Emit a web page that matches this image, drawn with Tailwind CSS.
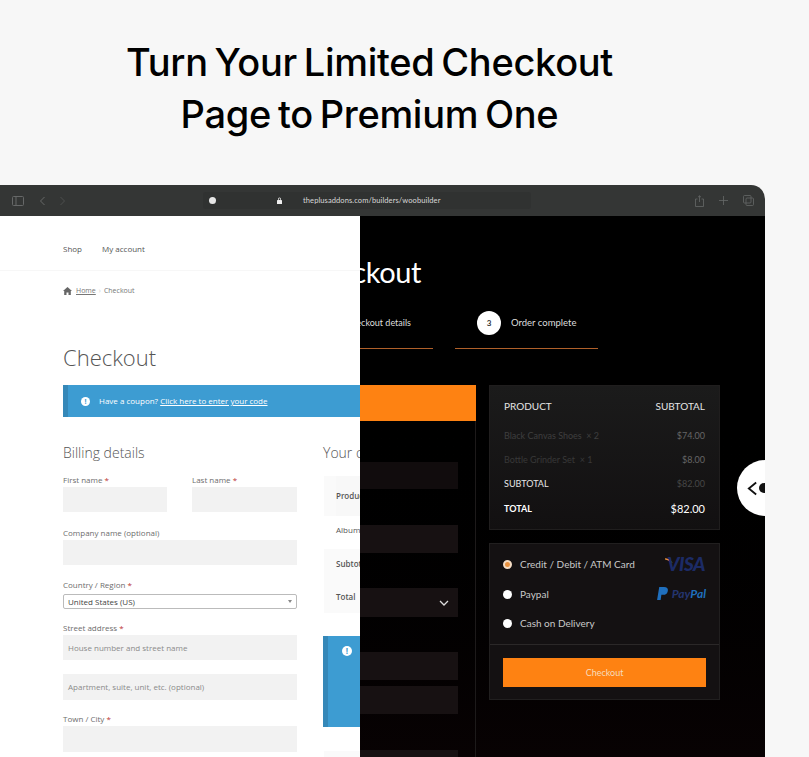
<!DOCTYPE html>
<html lang="en">
<head>
    <meta charset="UTF-8">
    <title>Turn Your Limited Checkout Page to Premium One</title>
    <script src="https://cdn.jsdelivr.net/npm/@tailwindcss/browser@4"></script>
</head>
<body class="bg-[#f7f7f7]">
<div class="h-[757px] w-[809px] overflow-hidden font-['Inter',sans-serif]">
    <!-- heading -->
    <h1 class="w-[739px] h-[185px] pt-[36px] text-center text-[38px] leading-[52px] font-medium tracking-[-0.3px] [word-spacing:-3px] text-black">Turn Your Limited Checkout<br>Page to Premium One</h1>

    <!-- browser frame -->
    <div class="w-[765px] h-[572px] rounded-tr-[14px] overflow-hidden">
        <div class="h-[31px] bg-[#343635] flex items-center text-[#666868]">
            <svg class="ml-[12px] w-[12px] h-[10px]" viewBox="0 0 12 10" fill="none" stroke="currentColor"><rect x="0.5" y="0.5" width="11" height="9" rx="1"/><path d="M4 1v8"/></svg>
            <svg class="ml-[15px] w-[7px] h-[10px]" viewBox="0 0 7 10" fill="none" stroke="currentColor"><path d="M5.5 1 1.5 5l4 4"/></svg>
            <svg class="ml-[13px] w-[7px] h-[10px] opacity-50" viewBox="0 0 7 10" fill="none" stroke="currentColor"><path d="M1.5 1l4 4-4 4"/></svg>
            <div class="ml-[137px] w-[328px] h-[17px] rounded-[3px] bg-[#303231] flex items-center">
                <span class="ml-[6px] w-[7px] h-[7px] rounded-full bg-[#e6e6e6]"></span>
                <svg class="ml-[61px] w-[5px] h-[7px]" viewBox="0 0 5 7" fill="#eee"><rect y="3" width="5" height="4" rx="0.6"/><path d="M1 3V2a1.500 1.500 0 0 1 3 0v1H3.300V2a.8.8 0 0 0-1.600 0v1z"/></svg>
                <span class="ml-[21px] text-[7.5px] text-[#d8d8d8] font-['Lato',sans-serif] tracking-[0.1px]">theplusaddons.com/builders/woobuilder</span>
            </div>
            <svg class="ml-auto w-[9px] h-[12px]" viewBox="0 0 9 12" fill="none" stroke="currentColor" stroke-width="0.8"><path d="M2.500 4H.5v7.500h8V4h-2M4.500 7V.8M3 2.200 4.500.8 6 2.200"/></svg>
            <svg class="ml-[15px] w-[9px] h-[9px]" viewBox="0 0 9 9" fill="none" stroke="currentColor" stroke-width="0.8"><path d="M4.500 0v9M0 4.500h9"/></svg>
            <svg class="ml-[15px] mr-[11px] w-[11px] h-[11px]" viewBox="0 0 11 11" fill="none" stroke="currentColor" stroke-width="0.8"><rect x="0.500" y="0.500" width="7.500" height="7.500" rx="1"/><rect x="3" y="3" width="7.500" height="7.500" rx="1"/></svg>
        </div>

        <div class="relative h-[541px] bg-[#050102] overflow-hidden font-['Lato',sans-serif]">
            <!-- dark version -->
            <div class="h-full bg-gradient-to-b from-black from-30% to-[#080203]">
                <div class="h-[169px]">
                    <div class="w-[421px] pt-[37px] text-right text-[29px] leading-[38px] font-normal tracking-[-0.4px] text-white">Checkout</div>
                    <div class="mt-[20px] flex">
                        <div class="w-[433px] shrink-0 h-[38px] border-b border-[#b0602a] pr-[22px] text-right text-[9px] leading-[23px] text-[#ddd]">Checkout details</div>
                        <div class="ml-[22px] w-[143px] shrink-0 h-[38px] border-b border-[#b0602a] flex items-start">
                            <span class="w-[24px] h-[24px] ml-[22px] rounded-full bg-white text-[8px] font-bold text-[#333] flex items-center justify-center">3</span>
                            <span class="ml-[10px] text-[9.500px] leading-[24px] text-[#ddd] whitespace-nowrap">Order complete</span>
                        </div>
                    </div>
                </div>
                <div class="flex">
                    <div class="w-[476px] shrink-0">
                        <div class="h-[36px] bg-[#fe8212]"></div>
                        <div class="h-[342px] border-r border-[#1d1a1a] pt-[41px] w-[476px] pr-[17px] flex flex-col items-stretch">
                            <div class="h-[27px] bg-[#110c0d]"></div>
                            <div class="mt-[36px] h-[28px] bg-[#171112]"></div>
                            <div class="mt-[35px] h-[29px] bg-[#171112] flex items-center justify-end pr-[9px]">
                                <svg class="w-[10px] h-[6px]" viewBox="0 0 10 6" fill="none" stroke="#ddd" stroke-width="1.300"><path d="M1 1l4 4 4-4"/></svg>
                            </div>
                            <div class="mt-[35px] h-[28px] bg-[#171112]"></div>
                            <div class="mt-[6px] h-[28px] bg-[#171112]"></div>
                            <div class="mt-[36px] h-[10px] bg-[#171112]"></div>
                        </div>
                    </div>

                    <div class="ml-[13px] w-[231px] shrink-0">
                        <!-- order summary -->
                        <div class="h-[145px] px-[14px] pt-[13px] bg-gradient-to-b from-[#1b1b1b] to-[#121011] border border-[#201e1e] text-[9px]">
                            <div class="h-[14px] flex justify-between items-center text-[10px] text-[#e4e4e4]"><span>PRODUCT</span><span>SUBTOTAL</span></div>
                            <div class="mt-[18px] h-[10px] flex justify-between items-center text-[#3f3f3f]"><span>Black Canvas Shoes &nbsp;× 2</span><span class="text-[#666]">$74.00</span></div>
                            <div class="mt-[14px] h-[10px] flex justify-between items-center text-[#383838]"><span>Bottle Grinder Set &nbsp;× 1</span><span class="text-[#666]">$8.00</span></div>
                            <div class="mt-[14px] h-[10px] flex justify-between items-center text-[#e8e8e8]"><span>SUBTOTAL</span><span class="text-[#474747]">$82.00</span></div>
                            <div class="mt-[15px] h-[10px] flex justify-between items-center font-bold text-white text-[9px]"><span>TOTAL</span><span class="font-normal text-[11px]">$82.00</span></div>
                        </div>

                        <!-- payment -->
                        <div class="mt-[13px] h-[157px] bg-[#141112] border border-[#211f1f]">
                            <div class="h-[101px] px-[13px] pt-[14px] border-b border-[#2b2828] text-[10px] text-[#c9c9c9]">
                                <div class="h-[12px] flex items-center">
                                    <span class="w-[9px] h-[9px] rounded-full bg-[#e8913f] border-[2px] border-[#f4dcc4]"></span>
                                    <span class="ml-[8px]">Credit / Debit / ATM Card</span>
                                    <svg class="ml-auto -mr-[7px] mb-[7px] w-[9px] h-[5px]" viewBox="0 0 9 5" fill="none" stroke="#e8913f" stroke-width="1.200"><path d="M0 .8c3 0 5 1.500 7 3.800"/></svg>
                                    <span class="mr-[1px] text-[19px] leading-[12px] font-black italic text-[#1c2b66] tracking-[-0.5px]">VISA</span>
                                </div>
                                <div class="mt-[18px] h-[12px] flex items-center">
                                    <span class="w-[9px] h-[9px] rounded-full bg-white"></span>
                                    <span class="ml-[8px]">Paypal</span>
                                    <svg class="ml-auto w-[12px] h-[14px]" viewBox="0 0 11 13"><path fill="#1f6fbd" d="M2 0h4.500c2.500 0 4 1.200 3.500 3.600C9.500 6 8 7.300 5.500 7.300H4L3.300 12H0z"/></svg>
                                    <span class="ml-[3px] text-[12px] font-bold italic text-[#24356f]">Pay<span class="text-[#1f6fbd]">Pal</span></span>
                                </div>
                                <div class="mt-[17px] h-[12px] flex items-center">
                                    <span class="w-[9px] h-[9px] rounded-full bg-white"></span>
                                    <span class="ml-[8px]">Cash on Delivery</span>
                                </div>
                            </div>
                            <div class="mx-[13px] mt-[13px] h-[29px] bg-[#fe8212] flex items-center justify-center text-[9px] text-[#f6dcbd]">Checkout</div>
                        </div>
                    </div>
                </div>
            </div>

            <!-- default version, over the dark one -->
            <div class="absolute left-0 top-0 w-[360px] h-full bg-white overflow-hidden font-['Open_Sans',sans-serif] text-[8px] text-[#6d6d6d]">
                <div class="h-[55px] pl-[63px] pt-[27px] border-b border-[#f7f7f7] flex gap-[20px] text-[8px] leading-[12px] text-[#555]"><span>Shop</span><span>My account</span></div>
                <div class="mt-[14px] h-[12px] pl-[63px] flex items-center text-[7px] text-[#777]">
                    <svg class="w-[9px] h-[8px]" viewBox="0 0 9 8" fill="#666"><path d="M4.500 0 9 4H7.800v4H5.500V5.500h-2V8H1.200V4H0z"/></svg>
                    <span class="ml-[4px] underline">Home</span><span class="mx-[3px] text-[#ccc]">›</span><span>Checkout</span>
                </div>
                <h2 class="mt-[45px] pl-[63px] text-[22px] leading-[30px] font-light text-[#555]">Checkout</h2>
                <div class="mt-[13px] ml-[63px] h-[32px] w-[320px] bg-[#3d9cd2] border-l-[5px] border-[#3588b8] flex items-center text-[8px] text-white">
                    <span class="ml-[13px] w-[9px] h-[9px] rounded-full bg-white text-[#3d9cd2] text-[7px] font-bold leading-[9px] text-center">!</span>
                    <span class="ml-[9px]">Have a coupon? <span class="underline">Click here to enter your code</span></span>
                </div>
                <div class="mt-[27px] pl-[63px] flex">
                    <div class="w-[234px] shrink-0">
                        <h3 class="text-[14px] leading-[18px] font-light text-[#555]">Billing details</h3>
                        <div class="mt-[12px] flex gap-[25px]">
                            <div class="w-[104px]"><div class="h-[12px] text-[8px] leading-[12px]">First name <span class="text-[#b33]">*</span></div><div class="mt-[1px] h-[25px] bg-[#f2f2f2]"></div></div>
                            <div class="w-[105px]"><div class="h-[12px] text-[8px] leading-[12px]">Last name <span class="text-[#b33]">*</span></div><div class="mt-[1px] h-[25px] bg-[#f2f2f2]"></div></div>
                        </div>
                        <div class="mt-[15px] h-[12px] leading-[12px]">Company name (optional)</div>
                        <div class="mt-[1px] h-[25px] bg-[#f2f2f2]"></div>
                        <div class="mt-[14px] h-[12px] leading-[12px]">Country / Region <span class="text-[#b33]">*</span></div>
                        <div class="mt-[3px] h-[15px] rounded-[2px] border border-[#bbb] pl-[4px] pr-[4px] flex items-center justify-between text-[8px] text-[#444]"><span>United States (US)</span><span class="w-0 h-0 border-x-[2px] border-t-[3px] border-x-transparent border-t-[#888]"></span></div>
                        <div class="mt-[13px] h-[12px] leading-[12px]">Street address <span class="text-[#b33]">*</span></div>
                        <div class="mt-[1px] h-[25px] bg-[#f2f2f2] pl-[5px] flex items-center text-[#8a8a8a]">House number and street name</div>
                        <div class="mt-[14px] h-[26px] bg-[#f2f2f2] pl-[5px] flex items-center text-[#8a8a8a]">Apartment, suite, unit, etc. (optional)</div>
                        <div class="mt-[13px] h-[12px] leading-[12px]">Town / City <span class="text-[#b33]">*</span></div>
                        <div class="mt-[1px] h-[26px] bg-[#f2f2f2]"></div>
                    </div>
                    <div class="ml-[26px] w-[120px] shrink-0">
                        <h3 class="text-[14px] leading-[18px] font-light text-[#555]">Your order</h3>
                        <div class="mt-[14px] ml-[1px] h-[137px] bg-[#fafafa] pl-[12px] font-semibold text-[#555]">
                            <div class="h-[40px] bg-[#f8f8f8] leading-[39px]">Product</div>
                            <div class="h-[33px] -ml-[12px] pl-[12px] bg-white font-normal leading-[28px]">Album</div>
                            <div class="h-[31px] leading-[30px]">Subtotal</div>
                            <div class="leading-[33px]">Total</div>
                        </div>
                        <div class="mt-[23px] h-[91px] bg-[#3d9cd2] border-l-[5px] border-[#3588b8] pl-[14px] pt-[10px]">
                            <span class="block w-[10px] h-[10px] rounded-full bg-white text-[#3d9cd2] text-[8px] font-bold leading-[10px] text-center">!</span>
                        </div>
                        <div class="mt-[24px] ml-[1px] h-[10px] bg-[#fafafa]"></div>
                    </div>
                </div>
            </div>

            <!-- compare handle -->
            <div class="absolute left-[737px] top-[244px] w-[56px] h-[56px] rounded-full bg-white flex items-center">
                <svg class="ml-[10px] w-[11px] h-[15px]" viewBox="0 0 12 16" fill="none" stroke="#111" stroke-width="2"><path d="M10 1.500 2 8l8 6.500"/></svg>
                <span class="ml-[1px] w-[10px] h-[10px] rounded-full bg-[#111]"></span>
            </div>
        </div>
    </div>
</div>
</body>
</html>
